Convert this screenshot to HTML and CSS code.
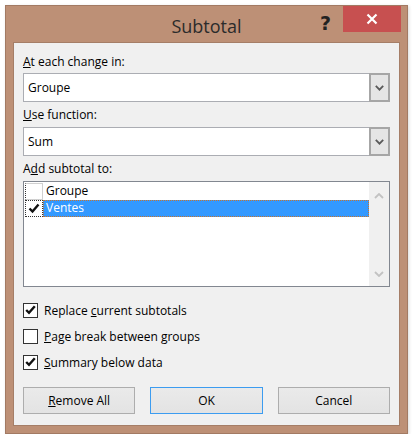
FILE: index.html
```html
<!DOCTYPE html>
<html lang="en">
<head>
    <meta charset="UTF-8">
    <title>Subtotal</title>
    <link rel="stylesheet" href="styles.css">
</head>
<body>

    <!-- Janela do diálogo -->
    <div class="janela">
        <div class="titulo">
            <span></span>
            <span class="titulo-texto">Subtotal</span>
            <div class="titulo-botoes">
                <span class="ajuda">?</span>
                <span class="fechar">
                    <svg width="12" height="12" viewBox="0 0 12 12">
                        <path d="M1.5 1.5 L10.5 10.5 M10.5 1.5 L1.5 10.5" stroke="#fff" stroke-width="2.2"/>
                    </svg>
                </span>
            </div>
        </div>

        <div class="conteudo">
            <div class="rotulo"><u>A</u>t each change in:</div>
            <div class="combo">
                <span class="combo-valor">Groupe</span>
                <span class="combo-seta">
                    <svg width="9" height="6" viewBox="0 0 9 6"><path d="M0.8 0.8 L4.5 4.6 L8.2 0.8" fill="none" stroke="#5a5a5a" stroke-width="1.8"/></svg>
                </span>
            </div>

            <div class="rotulo rotulo-meio"><u>U</u>se function:</div>
            <div class="combo">
                <span class="combo-valor">Sum</span>
                <span class="combo-seta">
                    <svg width="9" height="6" viewBox="0 0 9 6"><path d="M0.8 0.8 L4.5 4.6 L8.2 0.8" fill="none" stroke="#5a5a5a" stroke-width="1.8"/></svg>
                </span>
            </div>

            <div class="rotulo rotulo-meio">A<u>d</u>d subtotal to:</div>
            <div class="lista">
                <div class="lista-itens">
                    <div class="item">
                        <span class="item-caixa"></span>
                        <span class="item-texto">Groupe</span>
                    </div>
                    <div class="item">
                        <span class="item-caixa foco">
                            <svg width="12" height="11" viewBox="0 0 12 11"><path d="M1.5 5.5 L4.5 8.5 L10.5 1.5" fill="none" stroke="#111" stroke-width="2.4"/></svg>
                        </span>
                        <span class="item-texto selecionado">Ventes</span>
                    </div>
                </div>
                <div class="rolagem">
                    <svg width="10" height="6" viewBox="0 0 10 6"><path d="M1 5 L5 1 L9 5" fill="none" stroke="#c2c2c2" stroke-width="1.8"/></svg>
                    <svg width="10" height="6" viewBox="0 0 10 6"><path d="M1 1 L5 5 L9 1" fill="none" stroke="#c2c2c2" stroke-width="1.8"/></svg>
                </div>
            </div>

            <div class="opcoes">
                <label class="opcao">
                    <span class="caixa">
                        <svg width="11" height="10" viewBox="0 0 11 10"><path d="M1.2 5 L4 7.8 L9.8 1.2" fill="none" stroke="#111" stroke-width="2.4"/></svg>
                    </span>
                    <span>Replace <u>c</u>urrent subtotals</span>
                </label>
                <label class="opcao">
                    <span class="caixa"></span>
                    <span><u>P</u>age break between groups</span>
                </label>
                <label class="opcao">
                    <span class="caixa">
                        <svg width="11" height="10" viewBox="0 0 11 10"><path d="M1.2 5 L4 7.8 L9.8 1.2" fill="none" stroke="#111" stroke-width="2.4"/></svg>
                    </span>
                    <span><u>S</u>ummary below data</span>
                </label>
            </div>

            <div class="botoes">
                <button><u>R</u>emove All</button>
                <button class="padrao">OK</button>
                <button>Cancel</button>
            </div>
        </div>
    </div>

</body>
</html>
```

FILE: styles.css
```css
* {
    margin: 0;
    padding: 0;
    box-sizing: border-box;
}

body {
    font-family: "Open Sans", "Noto Sans", sans-serif;
    font-size: 12px;
    color: #000;
    background-color: #ffffff;
}

.janela {
    margin: 5px 0 0 5px;
    width: 403px;
    height: 429px;
    background-color: #bd9076; /* moldura marrom */
    border: 1px solid #a27a63;
    box-shadow: 1px 1px 3px rgba(0, 0, 0, 0.15);
    padding: 0 7px 7px 7px;
    display: flex;
    flex-direction: column;
}

.titulo {
    height: 36px;
    display: grid;
    grid-template-columns: 1fr auto 1fr;
    align-items: start;
    margin: 0 -1px;
}

.titulo-texto {
    font-size: 18px;
    color: #2b2b2b;
    padding-top: 8px;
    line-height: 24px;
}

.titulo-botoes {
    display: flex;
    justify-content: flex-end;
    align-items: flex-start;
}

.ajuda {
    font-family: "DejaVu Sans", sans-serif;
    font-weight: bold;
    font-size: 19px;
    color: #222;
    line-height: 22px;
    margin-top: 6px;
    margin-right: 12px;
}

.fechar {
    width: 58px;
    height: 26px;
    background-color: #c75050;
    display: flex;
    align-items: center;
    justify-content: center;
}

.conteudo {
    flex: 1;
    background-color: #f0f0f0;
    border: 1px solid #a57e67;
    padding: 11px 9px 0 9px;
}

.rotulo {
    line-height: 16px;
    margin-bottom: 3px;
}

.rotulo-meio {
    margin-top: 5px;
    margin-bottom: 4px;
}

.combo {
    height: 29px;
    background-color: #fff;
    border: 1px solid #abadb3;
    display: flex;
    align-items: stretch;
}

.combo-valor {
    flex: 1;
    padding-left: 4px;
    line-height: 27px;
}

.combo-seta {
    width: 21px;
    margin: -1px -1px -1px 0;
    background-color: #e5e5e5;
    border: 2px solid #a6a6a6;
    display: flex;
    align-items: center;
    justify-content: center;
}

.lista {
    height: 106px;
    background-color: #fff;
    border: 1px solid #828790;
    display: flex;
}

.lista-itens {
    flex: 1;
    padding: 1px 0 0 1px;
}

.item {
    display: flex;
    height: 17px;
}

.item-caixa {
    width: 18px;
    height: 17px;
    border: 1px solid #d0d0d0;
    border-left: 1px dotted #333;
    display: flex;
    align-items: center;
    justify-content: center;
}

.item-caixa.foco {
    border: 1px dotted #333;
}

.item-texto {
    flex: 1;
    padding-left: 3px;
    line-height: 16px;
}

.item-texto.selecionado {
    background-color: #3399ff;
    color: #fff;
    outline: 1px dotted #c8742c;
    outline-offset: -1px;
}

.rolagem {
    width: 20px;
    background-color: #f0f0f0;
    display: flex;
    flex-direction: column;
    justify-content: space-between;
    align-items: center;
    padding: 11px 0 9px 0;
}

.opcoes {
    margin-top: 10px;
}

.opcao {
    display: flex;
    align-items: center;
    gap: 6px;
    height: 26px;
}

.caixa {
    width: 15px;
    height: 15px;
    background-color: #fff;
    border: 1px solid #333;
    display: flex;
    align-items: center;
    justify-content: center;
}

.botoes {
    margin-top: 12px;
    display: grid;
    grid-template-columns: 1fr 1fr 1fr;
    gap: 15px;
}

button {
    height: 27px;
    font-family: inherit;
    font-size: 12px;
    color: #000;
    background: linear-gradient(#eaeaea, #e3e3e3);
    border: 1px solid #adadad;
}

button.padrao {
    border-color: #3c9cf0; /* botão padrão */
}
```
